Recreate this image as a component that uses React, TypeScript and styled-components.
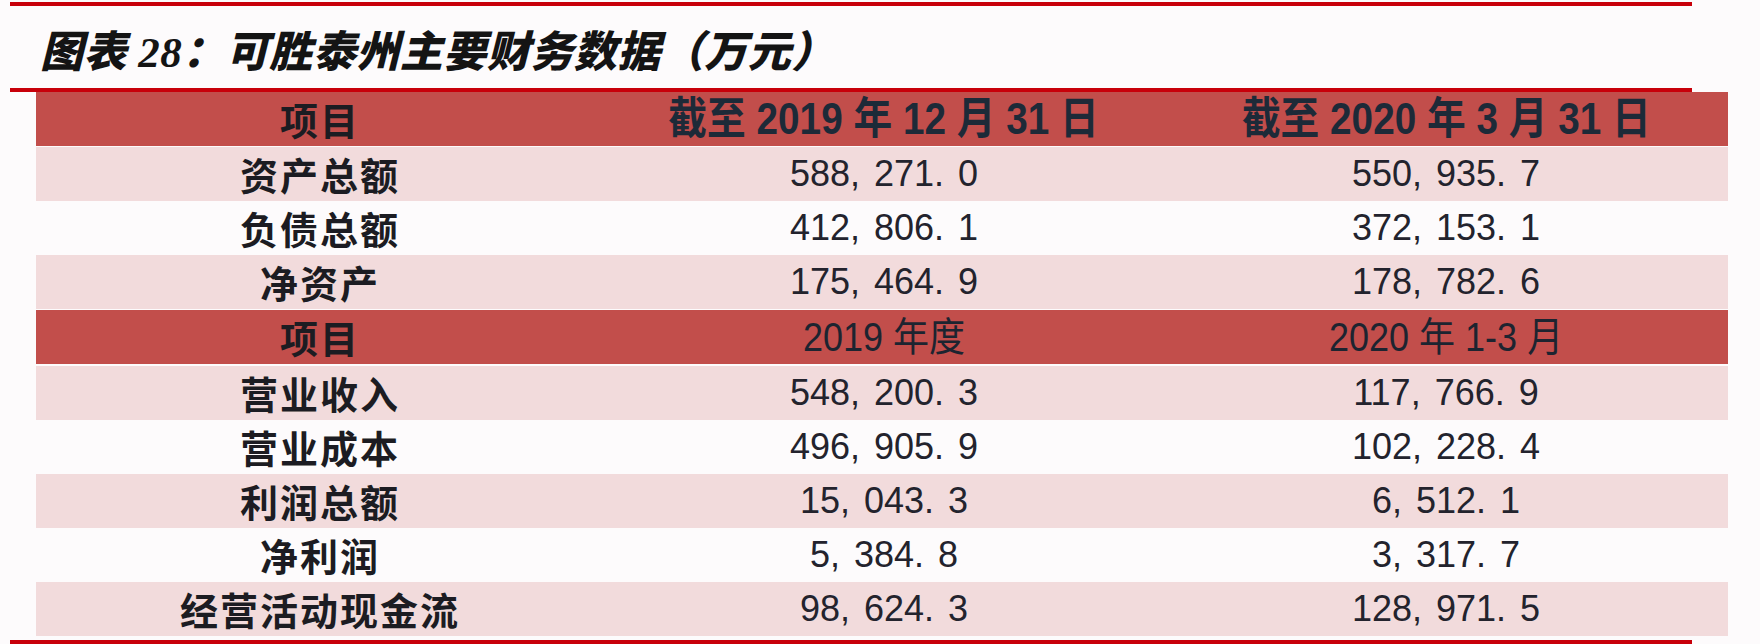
import React from "react";
import styled, { createGlobalStyle } from "styled-components";

const GlobalStyle = createGlobalStyle`
  html, body {
    margin: 0;
    padding: 0;
    background: #fdfbfc;
  }
`;

const RED_LINE = "#c8000a";
const HEAD_RED = "#c24e4b";
const PINK = "#f2dbdc";

type Tone = "head" | "pink" | "white";

interface DataRow {
  label: string;
  a: string;
  b: string;
}

const topRows: DataRow[] = [
  { label: "资产总额", a: "588,271.0", b: "550,935.7" },
  { label: "负债总额", a: "412,806.1", b: "372,153.1" },
  { label: "净资产", a: "175,464.9", b: "178,782.6" }
];

const bottomRows: DataRow[] = [
  { label: "营业收入", a: "548,200.3", b: "117,766.9" },
  { label: "营业成本", a: "496,905.9", b: "102,228.4" },
  { label: "利润总额", a: "15,043.3", b: "6,512.1" },
  { label: "净利润", a: "5,384.8", b: "3,317.7" },
  { label: "经营活动现金流", a: "98,624.3", b: "128,971.5" }
];

function Num({ value }: { value: string }) {
  const parts = value.split(/([,.])/);
  return (
    <>
      {parts.map((p, i) =>
        p === "," || p === "." ? <Punct key={i}>{p}</Punct> : <span key={i}>{p}</span>
      )}
    </>
  );
}

export default function App() {
  return (
    <Page>
      <GlobalStyle />
      <Rule />
      <Title>图表 28：可胜泰州主要财务数据（万元）</Title>
      <Rule />
      <Table>
        <Row $tone="head" $gapAfter={1}>
          <Label>项目</Label>
          <Cell>
            <HeadText>截至 2019 年 12 月 31 日</HeadText>
          </Cell>
          <Cell>
            <HeadText>截至 2020 年 3 月 31 日</HeadText>
          </Cell>
        </Row>
        {topRows.map((r, i) => (
          <Row key={r.label} $tone={i % 2 === 0 ? "pink" : "white"} $gapAfter={i === 2 ? 1 : 0}>
            <Label>{r.label}</Label>
            <Value><Num value={r.a} /></Value>
            <Value><Num value={r.b} /></Value>
          </Row>
        ))}
        <Row $tone="head" $gapAfter={2}>
          <Label>项目</Label>
          <Cell>
            <PlainHead>2019 年度</PlainHead>
          </Cell>
          <Cell>
            <PlainHead>2020 年 1-3 月</PlainHead>
          </Cell>
        </Row>
        {bottomRows.map((r, i) => (
          <Row key={r.label} $tone={i % 2 === 0 ? "pink" : "white"} $gapAfter={0}>
            <Label>{r.label}</Label>
            <Value><Num value={r.a} /></Value>
            <Value><Num value={r.b} /></Value>
          </Row>
        ))}
      </Table>
      <Rule $bottom />
    </Page>
  );
}

const Page = styled.div`
  width: 1760px;
  height: 644px;
  padding-top: 2px;
  box-sizing: border-box;
  overflow: hidden;
  display: flex;
  flex-direction: column;
`;

const Rule = styled.div<{ $bottom?: boolean }>`
  margin-left: 10px;
  margin-top: ${(p) => (p.$bottom ? "4px" : "0")};
  width: 1682px;
  height: 4px;
  flex-shrink: 0;
  background: ${RED_LINE};
`;

const Title = styled.div`
  height: 82px;
  display: flex;
  align-items: center;
  padding-left: 40px;
  padding-top: 2px;
  box-sizing: border-box;
  font-family: "Liberation Serif", "Noto Sans CJK SC", serif;
  font-size: 43px;
  font-weight: 900;
  font-style: italic;
  color: #141414;
  letter-spacing: 0.5px;
`;

const Table = styled.div`
  margin-left: 36px;
  width: 1692px;
  display: flex;
  flex-direction: column;
`;

const Row = styled.div<{ $tone: Tone; $gapAfter: number }>`
  height: 54px;
  margin-bottom: ${(p) => p.$gapAfter}px;
  display: grid;
  grid-template-columns: 568px 560px 564px;
  align-items: center;
  background: ${(p) =>
    p.$tone === "head" ? HEAD_RED : p.$tone === "pink" ? PINK : "transparent"};
`;

const Cell = styled.div`
  display: flex;
  justify-content: center;
`;

const Label = styled.div`
  text-align: center;
  font-family: "Noto Sans CJK SC", sans-serif;
  font-weight: 700;
  font-size: 38px;
  letter-spacing: 2px;
  color: #1c1c22;
  line-height: 1;
`;

const HeadText = styled.span`
  display: inline-block;
  white-space: nowrap;
  font-family: "Liberation Sans", Arial, "Noto Sans CJK SC", sans-serif;
  font-weight: 700;
  font-size: 44px;
  color: #1d2a38;
  line-height: 1;
  transform: scaleX(0.88);
`;

const PlainHead = styled.span`
  display: inline-block;
  white-space: nowrap;
  font-family: "Liberation Sans", Arial, "Noto Sans CJK SC", sans-serif;
  font-weight: 400;
  font-size: 40px;
  color: #1d2430;
  line-height: 1;
  transform: scaleX(0.9);
`;

const Value = styled.div`
  text-align: center;
  font-family: "Liberation Sans", Arial, sans-serif;
  font-size: 36px;
  color: #23232d;
  line-height: 1;
`;

const Punct = styled.span`
  display: inline-block;
  width: 24px;
  text-align: left;
`;
